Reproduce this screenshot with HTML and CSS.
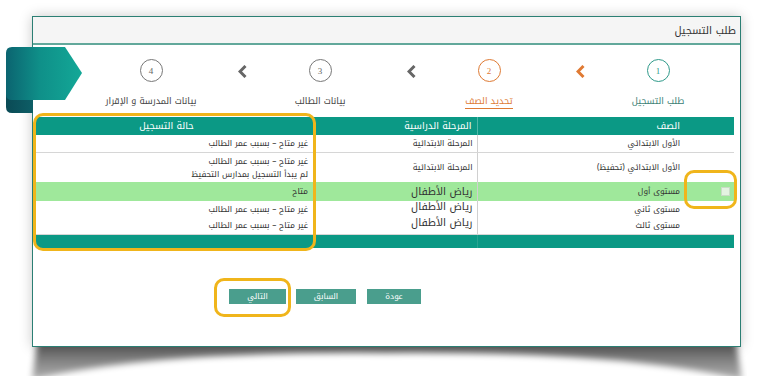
FILE: index.html
```html
<!DOCTYPE html>
<html lang="ar" dir="rtl">
  <head>
    <meta charset="UTF-8" />
    <meta name="viewport" content="width=device-width, initial-scale=1.0" />
    <title>طلب التسجيل</title>
    <link rel="stylesheet" href="styles.css">
  </head>
  <body>
    <div class="sheet">
      <!-- ظل الورقة -->
      <svg class="curl" width="721" height="40" viewBox="0 0 721 40">
        <defs>
          <filter id="soft" x="-5%" y="-50%" width="110%" height="200%">
            <feGaussianBlur stdDeviation="3" />
          </filter>
          <linearGradient id="shade" x1="0" y1="0" x2="0" y2="1">
            <stop offset="0.25" stop-color="#000" stop-opacity="0.62" />
            <stop offset="1" stop-color="#000" stop-opacity="0.3" />
          </linearGradient>
        </defs>
        <path d="M12,0 H709 L716,44 Q600,15 360,17 Q120,15 6,44 Z" fill="url(#shade)" filter="url(#soft)" />
      </svg>

      <div class="panel">
        <div class="panel-head">طلب التسجيل</div>

        <!-- مراحل الطلب -->
        <div class="steps">
          <div class="step done">
            <span class="num">1</span>
            <span class="label">طلب التسجيل</span>
          </div>
          <div class="chev active">
            <svg width="9" height="13" viewBox="0 0 9 13"><polyline points="7.5,1 2,6.5 7.5,12" /></svg>
          </div>
          <div class="step current">
            <span class="num">2</span>
            <span class="label">تحديد الصف</span>
          </div>
          <div class="chev">
            <svg width="9" height="13" viewBox="0 0 9 13"><polyline points="7.5,1 2,6.5 7.5,12" /></svg>
          </div>
          <div class="step">
            <span class="num">3</span>
            <span class="label">بيانات الطالب</span>
          </div>
          <div class="chev">
            <svg width="9" height="13" viewBox="0 0 9 13"><polyline points="7.5,1 2,6.5 7.5,12" /></svg>
          </div>
          <div class="step">
            <span class="num">4</span>
            <span class="label">بيانات المدرسة و الإقرار</span>
          </div>
        </div>

        <table class="grades">
          <colgroup>
            <col class="w-check" />
            <col class="w-grade" />
            <col class="w-stage" />
            <col class="w-status" />
          </colgroup>
          <thead>
            <tr>
              <th></th>
              <th class="c-grade">الصف</th>
              <th>المرحلة الدراسية</th>
              <th class="c-status">حالة التسجيل</th>
            </tr>
          </thead>
          <tbody>
            <tr class="r1 sep">
              <td></td>
              <td class="c-grade">الأول الابتدائي</td>
              <td>المرحلة الابتدائية</td>
              <td class="c-status">غير متاح – بسبب عمر الطالب</td>
            </tr>
            <tr class="r2">
              <td></td>
              <td class="c-grade">الأول الابتدائي (تحفيظ)</td>
              <td>المرحلة الابتدائية</td>
              <td class="c-status">غير متاح – بسبب عمر الطالب<br />لم يبدأ التسجيل بمدارس التحفيظ</td>
            </tr>
            <tr class="r3 open">
              <td><span class="box"></span></td>
              <td class="c-grade">مستوى أول</td>
              <td class="big">رياض الأطفال</td>
              <td class="c-status">متاح</td>
            </tr>
            <tr class="r4">
              <td></td>
              <td class="c-grade">مستوى ثاني</td>
              <td class="big">رياض الأطفال</td>
              <td class="c-status">غير متاح – بسبب عمر الطالب</td>
            </tr>
            <tr class="r5 sep">
              <td></td>
              <td class="c-grade">مستوى ثالث</td>
              <td class="big">رياض الأطفال</td>
              <td class="c-status">غير متاح – بسبب عمر الطالب</td>
            </tr>
            <tr class="foot">
              <td></td>
              <td class="c-grade"></td>
              <td colspan="2"></td>
            </tr>
          </tbody>
        </table>

        <div class="actions">
          <button class="btn">عودة</button>
          <button class="btn">السابق</button>
          <button class="btn">التالي</button>
        </div>

        <!-- التوضيحات فوق الصفحة -->
        <div class="ribbon">
          <svg width="78" height="68" viewBox="0 0 78 68">
            <defs>
              <linearGradient id="rb" x1="0" y1="0" x2="1" y2="0">
                <stop offset="0" stop-color="#0b6470" />
                <stop offset="0.45" stop-color="#0f9089" />
                <stop offset="1" stop-color="#13a897" />
              </linearGradient>
              <linearGradient id="fold" x1="0" y1="0" x2="1" y2="0">
                <stop offset="0" stop-color="#0a4a55" />
                <stop offset="1" stop-color="#0d5e66" />
              </linearGradient>
            </defs>
            <path d="M0,44 V60 Q0,66 6,66 H27 V52 Z" fill="url(#fold)" />
            <path d="M6,0 H59 L76,26 L59,53 H6 Q0,53 0,47 V6 Q0,0 6,0 Z" fill="url(#rb)" />
          </svg>
        </div>
        <div class="mark mark-status"></div>
        <div class="mark mark-check"></div>
        <div class="mark mark-next"></div>
      </div>
    </div>
  </body>
</html>
```

FILE: styles.css
```css
html {
  overflow: hidden;
}
body {
  margin: 0;
  padding-top: 16px;
  min-height: 376px;
  box-sizing: border-box;
  background: #fff;
  font-family: "Noto Kufi Arabic", "Noto Sans Arabic", "DejaVu Sans", sans-serif;
  color: #333;
}
.sheet {
  position: relative;
  width: 709px;
  height: 331px;
  margin: 0 24px 0 auto;
}
.curl {
  position: absolute;
  left: -6px;
  top: 320px;
  display: block;
}
.panel {
  position: relative;
  height: 100%;
  box-sizing: border-box;
  border: 1px solid #2b7f74;
  background: #fff;
  box-shadow: 0 0 12px rgba(0, 0, 0, 0.22);
}
.panel-head {
  height: 26px;
  line-height: 28px;
  padding: 0 4px;
  background: #f5f5f5;
  border-bottom: 2px solid #62a89b;
  font-size: 10.5px;
}

/* stepper */
.steps {
  display: flex;
  height: 71px;
  padding-right: 5px;
}
.step {
  width: 154px;
  display: flex;
  flex-direction: column;
  align-items: center;
  color: #444;
}
.step .num {
  width: 23px;
  height: 23px;
  margin-top: 14px;
  box-sizing: border-box;
  border: 1.5px solid #777;
  border-radius: 50%;
  display: flex;
  align-items: center;
  justify-content: center;
  font-family: "Liberation Serif", serif;
  font-size: 9px;
  color: #666;
}
.step .label {
  margin-top: 13px;
  font-size: 9px;
  line-height: 13px;
}
.step.done .num {
  border-color: #2f9a8a;
  color: #2f9a8a;
}
.step.done .label {
  color: #3b8074;
}
.step.current .num {
  border-color: #de7a34;
  color: #de7a34;
}
.step.current .label {
  color: #de7a34;
  border-bottom: 1.5px solid #de7a34;
}
.chev {
  width: 15px;
}
.chev svg {
  display: block;
  margin: 20px -4px 0 0;
}
.chev polyline {
  fill: none;
  stroke: #666;
  stroke-width: 3;
}
.chev.active polyline {
  stroke: #e07a33;
}

/* table */
.grades {
  width: 698px;
  margin: 1px 6px 0 0;
  border-collapse: collapse;
  table-layout: fixed;
  font-size: 8.2px;
}
.w-check {
  width: 46px;
}
.w-grade {
  width: 211px;
}
.w-stage {
  width: 160px;
}
.grades th {
  height: 17px;
  padding: 0 5px 0 4px;
  background: #0b9985;
  color: #fff;
  font-weight: normal;
  font-size: 9.5px;
  text-align: right;
}
.grades th.c-grade {
  padding-right: 8px;
  border-left: 1px solid #4fb8a8;
}
.grades th.c-status {
  padding-right: 24px;
  text-align: center;
}
.grades td {
  padding: 0 4px 0 4px;
  text-align: right;
  vertical-align: middle;
  line-height: 11px;
}
.grades td.c-grade {
  padding-right: 8px;
  border-left: 1px solid #d0d0d0;
}
.grades td.c-status {
  padding-right: 9px;
}
.grades td.big {
  font-size: 10.5px;
  line-height: 12px;
}
.grades tr.sep td {
  border-bottom: 1px solid #d6d6d6;
}
.r1 td {
  height: 17px;
}
.r2 td {
  height: 29px;
  line-height: 13px;
}
.r3 td {
  height: 19px;
}
.r4 td {
  height: 16px;
}
.r4 td.big,
.r5 td.big {
  vertical-align: top;
}
.r5 td {
  height: 17px;
}
.grades tr.open td {
  background: #9fe89b;
}
.grades tr.foot td {
  height: 13px;
  background: #0b9985;
  border-top: 1px solid #fff;
}
.grades tr.foot td.c-grade {
  border-left-color: #2aa391;
}
.box {
  display: inline-block;
  width: 7px;
  height: 7px;
  margin-left: 4px;
  border: 1px solid #c9dcc6;
  background: #e3f3e1;
  vertical-align: middle;
}

/* buttons */
.actions {
  display: flex;
  gap: 10px;
  margin-top: 41px;
  padding-right: 319px;
}
.btn {
  height: 15px;
  padding: 0;
  border: 0;
  background: #4a9e8d;
  color: #fff;
  font-family: inherit;
  font-size: 8px;
  line-height: 15px;
}
.btn:nth-child(1) {
  width: 54px;
  margin-left: 1px;
}
.btn:nth-child(2) {
  width: 60px;
}
.btn:nth-child(3) {
  width: 57px;
}

/* annotations */
.ribbon {
  position: absolute;
  left: -27px;
  top: 30px;
  line-height: 0;
}
.mark {
  position: absolute;
  box-sizing: border-box;
  border: 3px solid #f0b51b;
  border-radius: 10px;
}
.mark-status {
  left: 0;
  top: 96px;
  width: 283px;
  height: 138px;
}
.mark-check {
  left: 651px;
  top: 153px;
  width: 53px;
  height: 39px;
}
.mark-next {
  left: 181px;
  top: 261px;
  width: 77px;
  height: 39px;
}
```
